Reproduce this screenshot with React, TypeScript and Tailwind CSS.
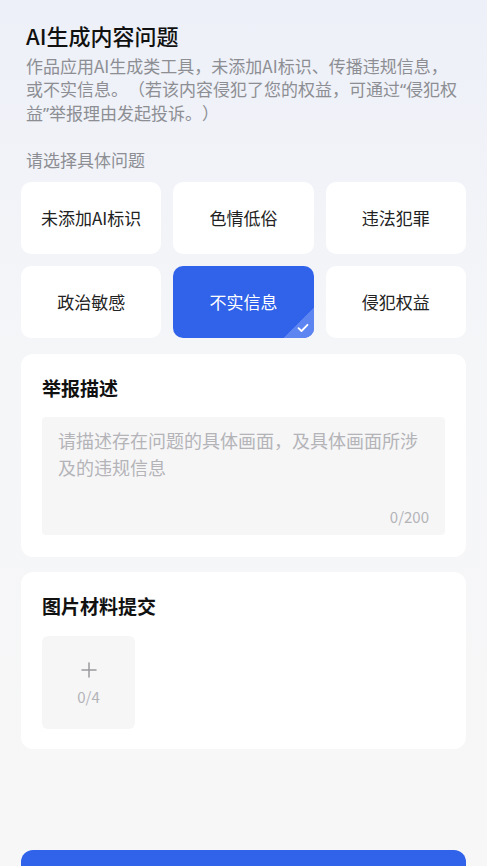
import { Plus } from "lucide-react"

const options = ["未添加AI标识", "色情低俗", "违法犯罪", "政治敏感", "不实信息", "侵犯权益"]

function Quote({ children }: { children: string }) {
  return <span style={{ fontFamily: '"Noto Sans", sans-serif' }}>{children}</span>
}

export default function App() {
  const selected = "不实信息"

  return (
    <div
      className="min-h-[866px] w-[487px] overflow-hidden bg-gradient-to-b from-[#edf0f8] via-[#f5f6f8] via-40% to-[#f7f7f7] px-[21px] pt-[20px] text-[#222] [text-spacing-trim:space-all]"
      style={{ fontFamily: '"Noto Sans CJK SC", "Noto Sans", sans-serif' }}
    >
      <div className="px-[5px]">
        <h1 className="text-[22px] leading-[30px] font-medium text-[#111]">AI生成内容问题</h1>
        <p className="mt-[4px] text-[17px] leading-[23px] text-[#8d8e93] whitespace-nowrap">
          作品应用AI生成类工具，未添加AI标识、传播违规信息，
          <br />
          或不实信息。（若该内容侵犯了您的权益，可通过<Quote>“</Quote>侵犯权
          <br />
          益<Quote>”</Quote>举报理由发起投诉。）
        </p>
        <div className="mt-[23px] text-[17px] leading-[24px] text-[#8d8e93]">请选择具体问题</div>
      </div>

      <div className="mt-[10px] grid grid-cols-3 gap-x-3 gap-y-3">
        {options.map((o) =>
          o === selected ? (
            <div
              key={o}
              className="relative flex h-[72px] items-center justify-center overflow-hidden rounded-[10px] bg-[#3062ea] text-[17px] text-white"
            >
              {o}
              <div className="absolute right-0 bottom-0 h-[30px] w-[30px] bg-[linear-gradient(135deg,transparent_50%,#5d85f1_50%)]" />
              <svg
                className="absolute right-[5px] bottom-[5px]"
                width="12"
                height="10"
                viewBox="0 0 12 10"
                fill="none"
              >
                <path d="M1.5 5.2 L4.5 8 L10.5 1.8" stroke="white" strokeWidth="1.8" strokeLinecap="round" strokeLinejoin="round" />
              </svg>
            </div>
          ) : (
            <div
              key={o}
              className="flex h-[72px] items-center justify-center rounded-[10px] bg-white text-[17px] text-[#222]"
            >
              {o}
            </div>
          )
        )}
      </div>

      <div className="mt-4 rounded-[12px] bg-white px-[21px] pt-[21px] pb-[22px]">
        <h2 className="text-[19px] leading-[26px] font-bold text-[#111]">举报描述</h2>
        <div className="mt-4 flex h-[118px] flex-col justify-between rounded-[4px] bg-[#f6f6f7] px-4 pt-[10px] pb-[8px]">
          <p className="text-[18px] leading-[27px] text-[#b4b4b8]">请描述存在问题的具体画面，及具体画面所涉及的违规信息</p>
          <div className="text-right text-[15px] leading-[20px] text-[#b4b4b8]">0/200</div>
        </div>
      </div>

      <div className="mt-[15px] rounded-[12px] bg-white px-[21px] pt-[21px] pb-[20px]">
        <h2 className="text-[19px] leading-[26px] font-bold text-[#111]">图片材料提交</h2>
        <div className="mt-[17px] flex h-[93px] w-[93px] flex-col items-center justify-center rounded-[6px] bg-[#f6f6f7]">
          <Plus size={24} strokeWidth={1.5} className="text-[#9a9a9e]" />
          <div className="mt-[5px] text-[15px] leading-[20px] text-[#b4b4b8]">0/4</div>
        </div>
      </div>

      <button className="mt-[101px] block h-[50px] w-full rounded-[12px] bg-[#3062ea]" aria-label="提交" />
    </div>
  )
}
